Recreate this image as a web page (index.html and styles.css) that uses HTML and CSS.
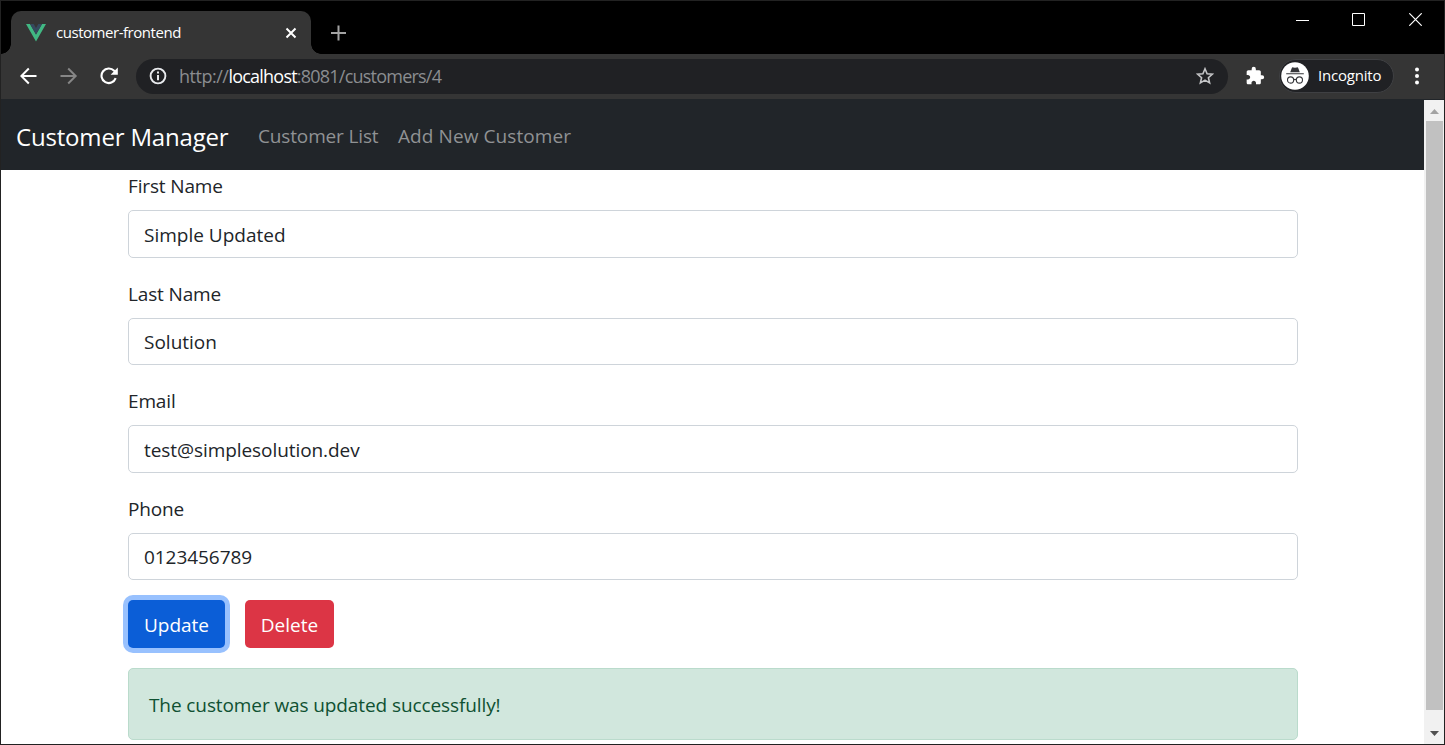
FILE: index.html
```html
<!DOCTYPE html>
<html lang="en">
<head>
  <meta charset="UTF-8">
  <meta name="viewport" content="width=device-width, initial-scale=1.0">
  <title>customer-frontend</title>
  <link rel="stylesheet" href="styles.css">
</head>
<body>
  <div class="window">
    <div class="tab-strip">
      <div class="tab">
        <svg class="vue-logo" width="20" height="18" viewBox="0 0 20 18">
          <path fill="#41b883" d="M0 0h4l6 10.5L16 0h4L10 17.5z"/>
          <path fill="#35495e" d="M4 0h3.7L10 4l2.3-4H16l-6 10.5z"/>
        </svg>
        <span class="tab-title">customer-frontend</span>
        <svg class="tab-close" width="12" height="12" viewBox="0 0 12 12" stroke="#fff" stroke-width="2">
          <path d="M1.5 1.5l9 9M10.5 1.5l-9 9"/>
        </svg>
      </div>
      <svg class="new-tab" width="16" height="16" viewBox="0 0 16 16" stroke="#a3a3a3" stroke-width="2">
        <path d="M7.5 .5v15M0 8h15"/>
      </svg>
      <div class="window-buttons">
        <svg width="13" height="13" viewBox="0 0 13 13"><path stroke="#fff" d="M0 7.5h13"/></svg>
        <svg width="13" height="13" viewBox="0 0 13 13"><path stroke="#fff" fill="none" d="M.5.5h12v12H.5z"/></svg>
        <svg width="13" height="13" viewBox="0 0 13 13"><path stroke="#fff" stroke-width="1.2" d="M.3.3l12.4 12.4M12.7.3L.3 12.7"/></svg>
      </div>
    </div>

    <div class="toolbar">
      <div class="nav-icons">
        <svg width="18" height="18" viewBox="0 0 18 18" fill="none" stroke="#fff" stroke-width="2"><path d="M16.500 9H1.500M8.800 1.500L1.300 9l7.500 7.500"/></svg>
        <svg width="18" height="18" viewBox="0 0 18 18" fill="none" stroke="#868686" stroke-width="2"><path d="M.5 9h15M8.2 1.5L15.700 9l-7.500 7.500"/></svg>
        <svg width="18" height="18" viewBox="0 0 18 18" fill="none" stroke="#fff" stroke-width="2.1"><path d="M15.7 11.2A7.3 7.3 0 1 1 14.2 3.8l1.4 1.5"/><path fill="#fff" stroke="none" d="M17.8.6v7.2h-7.2z"/></svg>
      </div>
      <div class="address-bar">
        <svg width="18" height="18" viewBox="0 0 18 18"><circle cx="9" cy="9" r="7.4" fill="none" stroke="#e8eaed" stroke-width="1.9"/><path fill="#e8eaed" d="M8 4.6h2v2H8zM8 8h2v5.2H8z"/></svg>
        <span class="url"><span class="scheme">http://</span><b>localhost</b>:8081/customers/4</span>
        <svg class="star" width="18" height="18" viewBox="0 0 18 18"><path fill="none" stroke="#c4c5c7" stroke-width="1.6" d="M9 1.8l2.1 4.9 5.3.5-4 3.5 1.2 5.2L9 13.1l-4.6 2.8 1.2-5.2-4-3.5 5.3-.5z"/></svg>
      </div>
      <svg class="puzzle" width="20" height="20" viewBox="0 0 24 24"><path fill="#fff" d="M20.5 11H19V7c0-1.1-.9-2-2-2h-4V3.5a2.5 2.5 0 0 0-5 0V5H4c-1.1 0-1.99.9-1.99 2v3.8H3.5c1.49 0 2.7 1.21 2.7 2.7s-1.21 2.7-2.7 2.7H2V20c0 1.1.9 2 2 2h3.8v-1.5c0-1.49 1.21-2.7 2.7-2.7s2.7 1.21 2.7 2.7V22H17c1.1 0 2-.9 2-2v-4h1.5a2.5 2.5 0 0 0 0-5z"/></svg>
      <div class="incognito">
        <svg width="28" height="28" viewBox="0 0 28 28">
          <circle cx="14" cy="14" r="13.8" fill="#fff"/>
          <path fill="#35363a" d="M9.2 10.2l1.5-4q.4-1.2 1.6-.8l1.7.4 1.7-.4q1.2-.4 1.6.8l1.5 4zM5.2 11.2h17.6v1.1H5.2z"/>
          <g fill="none" stroke="#35363a" stroke-width="1.1"><circle cx="9.6" cy="18" r="3.1"/><circle cx="18.4" cy="18" r="3.1"/><path d="M12.7 17.8q1.3-.9 2.6 0"/></g>
        </svg>
        <span>Incognito</span>
      </div>
      <svg class="menu" width="4" height="18" viewBox="0 0 4 18" fill="#fff"><circle cx="2" cy="2.5" r="2"/><circle cx="2" cy="9" r="2"/><circle cx="2" cy="15.5" r="2"/></svg>
    </div>

    <div class="viewport">
      <div class="page">
        <nav class="navbar">
          <a class="navbar-brand">Customer Manager</a>
          <a class="nav-link list-link">Customer List</a>
          <a class="nav-link add-link">Add New Customer</a>
        </nav>
        <div class="container">
          <div class="form-group">
            <label for="firstName">First Name</label>
            <input type="text" id="firstName" value="Simple Updated">
          </div>
          <div class="form-group">
            <label for="lastName">Last Name</label>
            <input type="text" id="lastName" value="Solution">
          </div>
          <div class="form-group">
            <label for="email">Email</label>
            <input class="email-input" type="text" id="email" value="test@simplesolution.dev">
          </div>
          <div class="form-group">
            <label for="phone">Phone</label>
            <input class="phone-input" type="text" id="phone" value="0123456789">
          </div>
          <div class="buttons">
            <button class="btn btn-primary">Update</button>
            <button class="btn btn-danger">Delete</button>
          </div>
          <div class="alert"><span>The customer was updated successfully!</span></div>
        </div>
      </div>
      <div class="scrollbar">
        <svg width="20" height="21" viewBox="0 0 20 21"><path fill="#a3a3a3" d="M6 14l4.5-5 4.5 5z"/></svg>
        <div class="thumb"></div>
        <svg width="20" height="21" viewBox="0 0 20 21"><path fill="#505050" d="M6 9l4.5 5L15 9z"/></svg>
      </div>
    </div>
  </div>
</body>
</html>
```
FILE: styles.css
```css
* {
  box-sizing: border-box;
}
body {
  margin: 0;
  font-family: "Open Sans", "Noto Sans", sans-serif;
  font-size: 19px;
  color: #212529;
  overflow: hidden;
}
svg {
  display: block;
  flex-shrink: 0;
}
.window {
  display: flex;
  flex-direction: column;
  width: 1445px;
  height: 745px;
  border: 1px solid #222;
  background-color: #fff;
}

/* tabs */
.tab-strip {
  display: flex;
  height: 53px;
  padding-left: 10px;
  background-color: #000;
}
.tab {
  position: relative;
  display: flex;
  align-items: center;
  width: 300px;
  height: 43px;
  margin-top: 10px;
  padding: 0 14px 0 15px;
  border-radius: 10px 10px 0 0;
  background-color: #353535;
}
.tab::before, .tab::after {
  content: "";
  position: absolute;
  bottom: 0;
  width: 10px;
  height: 10px;
}
.tab::before {
  left: -10px;
  background: radial-gradient(circle at 0 0, transparent 9.5px, #353535 10px);
}
.tab::after {
  right: -10px;
  background: radial-gradient(circle at 100% 0, transparent 9.5px, #353535 10px);
}
.tab-title {
  margin-left: 10px;
  padding-bottom: 2px;
  font-size: 15px;
  letter-spacing: -0.46px;
  color: #fff;
}
.tab-close {
  margin-left: auto;
}
.new-tab {
  margin: 24px 0 0 20px;
}
.window-buttons {
  display: flex;
  gap: 44px;
  margin: 12px 22px 0 auto;
}
.window-buttons svg:first-child {
  margin-right: -1px;
}

/* toolbar */
.toolbar {
  display: flex;
  align-items: center;
  height: 45px;
  padding: 0 25px 1px 19px;
  background-color: #353535;
}
.nav-icons {
  display: flex;
  gap: 22px;
}
.address-bar {
  display: flex;
  align-items: center;
  width: 1092px;
  height: 35px;
  margin: 1px 0 0 18px;
  padding: 0 14px 1px 13px;
  border-radius: 18px;
  background-color: #202124;
}
.url {
  margin-left: 12px;
  font-size: 18px;
  letter-spacing: -0.78px;
  color: #8b8d90;
}
.scheme {
  letter-spacing: -0.48px;
}
.url b {
  font-weight: 400;
  color: #fff;
}
.star {
  margin-left: auto;
}
.puzzle {
  margin-left: 17px;
}
.incognito {
  display: flex;
  align-items: center;
  width: 115px;
  height: 34px;
  margin-left: 14px;
  padding-left: 1px;
  border: 1px solid #3f4043;
  border-radius: 17px;
  background-color: #202124;
  font-size: 15px;
  letter-spacing: -0.2px;
  color: #fff;
}
.incognito span {
  margin-left: 9px;
  padding-bottom: 2px;
}
.menu {
  margin-left: auto;
}

/* page */
.viewport {
  display: flex;
  flex: 1;
  min-height: 0;
}
.page {
  flex: 1;
  overflow: hidden;
}
.navbar {
  display: flex;
  align-items: center;
  height: 71px;
  padding: 0 15px;
  background-color: #212529;
  white-space: nowrap;
}
.navbar-brand {
  width: 242px;
  padding-top: 4px;
  font-size: 24px;
  letter-spacing: -0.18px;
  color: #fff;
}
.nav-link {
  padding-top: 2px;
  color: #909294;
}
.list-link {
  width: 140px;
  letter-spacing: -0.15px;
}
.add-link {
  letter-spacing: 0.08px;
}
.container {
  width: 1170px;
  margin-left: 127px;
}
.form-group {
  display: flex;
  flex-direction: column;
  height: 107.5px;
}
label {
  height: 30px;
  margin-bottom: 10px;
  line-height: 32px;
  letter-spacing: -0.15px;
}
input {
  width: 100%;
  height: 47.5px;
  padding: 2px 15px 0;
  border: 1px solid #ced4da;
  border-radius: 5px;
  background-color: #fff;
  color: #212529;
  font: inherit;
}
.email-input {
  letter-spacing: -0.07px;
}
.phone-input {
  letter-spacing: -0.06px;
}
.buttons {
  display: flex;
  gap: 20px;
  margin-bottom: 20px;
}
.btn {
  width: 97px;
  height: 47.5px;
  padding: 2px 0 0;
  border: none;
  border-radius: 5px;
  font: inherit;
  color: #fff;
}
.btn-primary {
  background-color: #0b5ed7;
  box-shadow: 0 0 0 5px #98c1fe;
}
.btn-danger {
  width: 89px;
  background-color: #dc3545;
}
.alert {
  display: flex;
  align-items: center;
  height: 72.5px;
  padding: 2px 20px 0;
  border: 1px solid #badbcc;
  border-radius: 5px;
  background-color: #d1e7dd;
  color: #0f5132;
  letter-spacing: -0.1px;
}
.scrollbar {
  display: flex;
  flex-direction: column;
  width: 20px;
  border-top: 1px solid #212529;
  background-color: #f1f1f1;
}
.thumb {
  width: 17px;
  height: 589px;
  margin: 0 0 12px 2px;
  background-color: #c1c1c1;
}
```
